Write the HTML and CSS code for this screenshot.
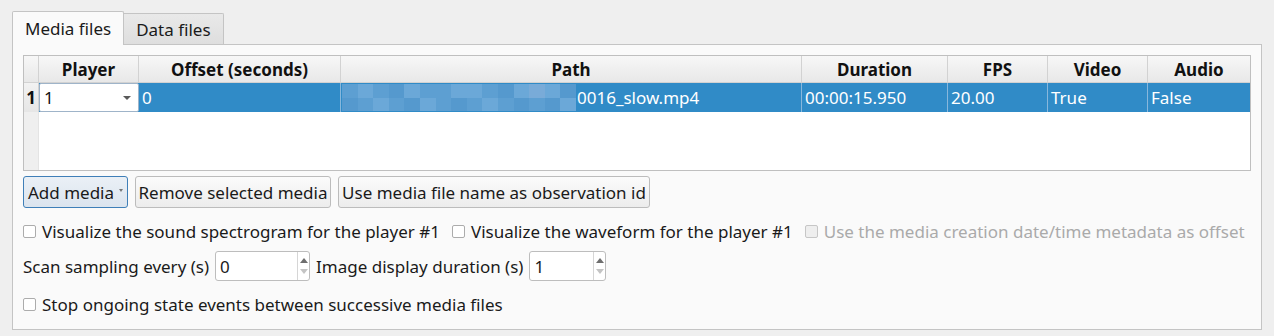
FILE: index.html
```html
<!DOCTYPE html>
<html lang="en">
<head>
  <meta charset="UTF-8">
  <title>Observation media</title>
  <link rel="stylesheet" href="styles.css">
</head>
<body>
  <div class="tab-widget">
    <div class="tab-bar">
      <div class="tab active">Media files</div>
      <div class="tab">Data files</div>
    </div>
    <div class="pane">
      <div class="media-table">
        <div class="hcell corner"></div>
        <div class="hcell">Player</div>
        <div class="hcell">Offset (seconds)</div>
        <div class="hcell">Path</div>
        <div class="hcell">Duration</div>
        <div class="hcell">FPS</div>
        <div class="hcell">Video</div>
        <div class="hcell last">Audio</div>

        <div class="rowhead">1</div>
        <div class="cell editor">
          <div class="combo"><span>1</span><span class="combo-arrow"></span></div>
        </div>
        <div class="cell sel">0</div>
        <div class="cell sel path">
          <div class="mosaic">
            <span class="px a"></span><span class="px b"></span><span class="px a"></span><span class="px c"></span><span class="px b"></span><span class="px a"></span><span class="px a"></span><span class="px b"></span><span class="px b"></span><span class="px a"></span><span class="px c"></span><span class="px b"></span><span class="px d"></span><span class="px b"></span><span class="px c"></span>
            <span class="px c"></span><span class="px a"></span><span class="px b"></span><span class="px a"></span><span class="px c"></span><span class="px b"></span><span class="px a"></span><span class="px c"></span><span class="px a"></span><span class="px b"></span><span class="px a"></span><span class="px c"></span><span class="px a"></span><span class="px c"></span><span class="px b"></span>
          </div>
          <span>0016_slow.mp4</span>
        </div>
        <div class="cell sel">00:00:15.950</div>
        <div class="cell sel">20.00</div>
        <div class="cell sel">True</div>
        <div class="cell sel last">False</div>

        <div class="rowhead-fill"></div>
        <div class="body-fill"></div>
      </div>

      <div class="button-row">
        <button class="btn default add">Add media <span class="menu-arrow"></span></button>
        <button class="btn remove">Remove selected media</button>
        <button class="btn use-name">Use media file name as observation id</button>
      </div>

      <div class="option-row">
        <label class="check"><span class="box"></span>Visualize the sound spectrogram for the player #1</label>
        <label class="check"><span class="box"></span>Visualize the waveform for the player #1</label>
        <label class="check disabled"><span class="box"></span>Use the media creation date/time metadata as offset</label>
      </div>

      <div class="option-row spins">
        <span>Scan sampling every (s)</span>
        <div class="spin wide"><span class="spin-value">0</span><span class="spin-buttons"><span class="up"></span><span class="down"></span></span></div>
        <span>Image display duration (s)</span>
        <div class="spin"><span class="spin-value">1</span><span class="spin-buttons"><span class="up"></span><span class="down"></span></span></div>
      </div>

      <div class="option-row">
        <label class="check"><span class="box"></span>Stop ongoing state events between successive media files</label>
      </div>
    </div>
  </div>
</body>
</html>
```

FILE: styles.css
```css
html, body {
  margin: 0;
  background: #efefef;
  font-family: "Noto Sans", "DejaVu Sans", sans-serif;
  font-size: 17px;
  color: #1a1a1a;
}
.tab-widget {
  padding: 11px 0 0 12px;
  width: 1250px;
}
.tab-bar {
  display: flex;
  align-items: flex-end;
  height: 33px;
}
.tab {
  height: 30px;
  line-height: 31px;
  padding: 0 12px;
  border: 1px solid #c4c4c4;
  border-bottom: none;
  border-left: none;
  background: linear-gradient(#e9e9e9, #dedede);
  border-radius: 0 2px 0 0;
}
.tab.active {
  height: 33px;
  line-height: 34px;
  background: #fafafa;
  border-left: 1px solid #c4c4c4;
  border-radius: 2px 2px 0 0;
  margin-bottom: -1px;
  position: relative;
  z-index: 1;
}
.pane {
  border: 1px solid #c4c4c4;
  background: #fafafa;
  padding: 10px 10px 0 10px;
  box-sizing: border-box;
  height: 286px;
}
.media-table {
  display: grid;
  grid-template-columns: 15px 100px 202px 461px 146px 100px 100px 1fr;
  grid-template-rows: 27px 29px 1fr;
  height: 116px;
  border: 1px solid #bfbfbf;
  background: #fff;
  box-sizing: border-box;
}
.hcell {
  background: linear-gradient(#f7f7f7, #e8e8e8);
  border-right: 1px solid #d2d2d2;
  border-bottom: 1px solid #d2d2d2;
  font-weight: bold;
  text-align: center;
  line-height: 28px;
  color: #111;
}
.hcell.last { border-right: none; }
.rowhead {
  background: linear-gradient(#f2f2f2, #e6e6e6);
  border-right: 1px solid #d2d2d2;
  font-weight: bold;
  line-height: 30px;
  text-align: center;
  color: #111;
}
.cell {
  line-height: 30px;
  padding-left: 3px;
  white-space: nowrap;
  overflow: hidden;
}
.cell.sel {
  background: #308bc7;
  color: #fff;
  border-right: 1px solid #88b7dc;
}
.cell.sel.last { border-right: none; }
.cell.editor {
  padding: 0;
  background: #308bc7;
}
.combo {
  height: 29px;
  box-sizing: border-box;
  border: 1px solid #9fb4c9;
  border-radius: 2px;
  background: #fff;
  display: flex;
  align-items: center;
  justify-content: space-between;
  padding: 0 7px 0 4px;
  color: #111;
}
.combo-arrow {
  width: 0;
  height: 0;
  border-left: 4px solid transparent;
  border-right: 4px solid transparent;
  border-top: 4px solid #5a5a5a;
}
.path {
  display: flex;
  align-items: center;
  padding-left: 1px;
}
.mosaic {
  display: grid;
  grid-template-columns: repeat(15, 1fr);
  grid-template-rows: 14px 13px;
  width: 234px;
  margin-right: 1px;
}
.px.a { background: #5d9fd2; }
.px.b { background: #6ba8d8; }
.px.c { background: #5599ce; }
.px.d { background: #79abd8; }
.rowhead-fill {
  background: #efefef;
  border-right: 1px solid #e4e4e4;
}
.body-fill {
  grid-column: 2 / -1;
  background: #fff;
}
.button-row {
  display: flex;
  gap: 7px;
  margin-top: 5px;
}
.btn {
  font: inherit;
  color: #1a1a1a;
  height: 32px;
  padding: 0 4px;
  border: 1px solid #bcbcbc;
  border-radius: 3px;
  background: linear-gradient(#fbfbfb, #ececec);
  display: flex;
  align-items: center;
  justify-content: center;
  gap: 5px;
  white-space: nowrap;
}
.btn.add { width: 105px; }
.btn.remove { width: 196px; }
.btn.use-name { width: 312px; }
.btn.default {
  border-color: #3f7fb8;
  background: linear-gradient(#eaf0f6, #dbe4ee);
}
.menu-arrow {
  width: 0;
  height: 0;
  border-left: 2px solid transparent;
  border-right: 2px solid transparent;
  border-top: 3px solid #777;
  margin-top: -4px;
}
.option-row {
  display: flex;
  align-items: center;
  gap: 12px;
  margin-top: 12px;
  height: 22px;
}
.option-row.spins {
  gap: 6px;
  height: 30px;
  margin-top: 9px;
}
.check {
  display: flex;
  align-items: center;
  gap: 6px;
}
.box {
  width: 11px;
  height: 11px;
  border: 1px solid #acacac;
  border-radius: 2px;
  background: #fff;
}
.check.disabled { color: #aaaaaa; }
.check.disabled .box {
  background: #eeeeee;
  border-color: #c6c6c6;
}
.spin {
  width: 77px;
  height: 30px;
  box-sizing: border-box;
  border: 1px solid #bdbdbd;
  border-radius: 3px;
  background: #fff;
  display: flex;
}
.spin.wide { width: 95px; }
.spin-value {
  flex: 1;
  line-height: 29px;
  padding-left: 4px;
}
.spin-buttons {
  width: 11px;
  border-left: 1px solid #d6d6d6;
  display: flex;
  flex-direction: column;
  align-items: center;
  justify-content: center;
  gap: 6px;
}
.spin-buttons .up {
  border-left: 4px solid transparent;
  border-right: 4px solid transparent;
  border-bottom: 5px solid #6e6e6e;
}
.spin-buttons .down {
  border-left: 4px solid transparent;
  border-right: 4px solid transparent;
  border-top: 5px solid #c4c4c4;
}
```
